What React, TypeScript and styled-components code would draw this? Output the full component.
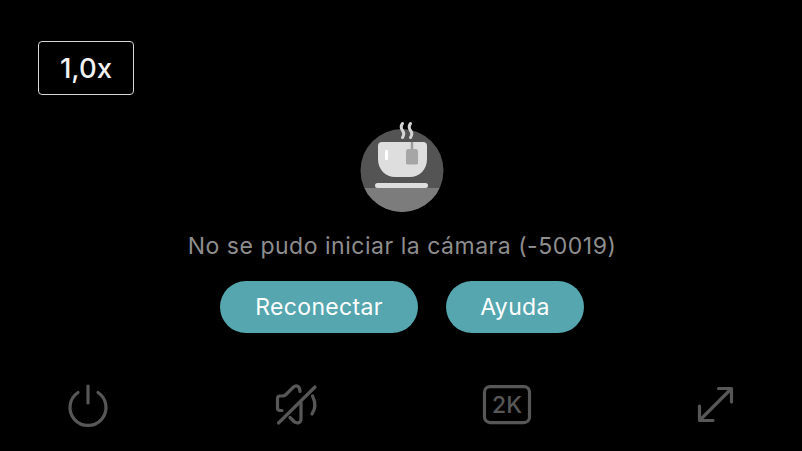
import styled, { createGlobalStyle } from 'styled-components'

const GlobalStyle = createGlobalStyle`
    html, body {
        margin: 0;
        padding: 0;
        background: #000;
    }
`

const Screen = styled.div`
    width: 802px;
    height: 451px;
    box-sizing: border-box;
    padding-top: 41px;
    background: #000;
    display: flex;
    flex-direction: column;
    font-family: Inter, 'Liberation Sans', sans-serif;
    overflow: hidden;
`

const TopBar = styled.div`
    display: flex;
    padding-left: 38px;
`

const SpeedBadge = styled.div`
    width: 96px;
    height: 54px;
    box-sizing: border-box;
    border: 1px solid #d8d8d8;
    border-radius: 4px;
    display: flex;
    align-items: center;
    justify-content: center;
    color: #f2f2f2;
    font-size: 27.5px;
    font-weight: 500;
`

const Message = styled.div`
    display: flex;
    flex-direction: column;
    align-items: center;
    padding: 26px 0 0 2px;
`

const ErrorText = styled.div`
    margin-top: 20px;
    height: 27px;
    line-height: 27px;
    color: #8e8e8e;
    font-size: 23px;
    letter-spacing: 0.52px;
`

const Actions = styled.div`
    display: flex;
    gap: 28px;
    margin-top: 21px;
`

const ActionButton = styled.button<{ $width: number }>`
    width: ${(p) => p.$width}px;
    height: 52px;
    border: none;
    border-radius: 26px;
    background: #55a6ae;
    color: #fff;
    font-family: inherit;
    font-size: 23px;
    letter-spacing: 0.35px;
    padding: 0;
`

const Toolbar = styled.div`
    display: flex;
    gap: 165.33px;
    margin-top: 49px;
    padding-left: 66px;
`

const ToolIcon = styled.svg`
    width: 44px;
    height: 44px;
    overflow: visible;
    flex-shrink: 0;
    fill: none;
    stroke: #575757;
    stroke-width: 3.2;
    stroke-linecap: round;
    stroke-linejoin: round;
`

const QualityText = styled.text`
    fill: #575757;
    stroke: none;
    font-family: Inter, 'Liberation Sans', sans-serif;
    font-size: 23px;
    font-weight: 500;
    text-anchor: middle;
`

const CupIllustration = () => (
    <svg width="84" height="92" viewBox="0 0 84 92">
        <defs>
            <clipPath id="disc">
                <circle cx="42" cy="49.500" r="41.500" />
            </clipPath>
        </defs>
        <circle cx="42" cy="49.500" r="41.500" fill="#545454" />
        <rect x="0" y="67" width="84" height="30" fill="#7c7c7c" clipPath="url(#disc)" />
        <path
            d="M42.500 2.500c-1.800 2.500-1.800 4.500 0 7s1.800 4.500 0 7M50.500 2.500c-1.800 2.500-1.800 4.500 0 7s1.800 4.500 0 7"
            fill="none"
            stroke="#d4d4d4"
            strokeWidth="3"
            strokeLinecap="round"
        />
        <path
            d="M18 25a4 4 0 0 1 4-4h41a4 4 0 0 1 4 4v13c0 11-8 18-17 18H35c-9 0-17-7-17-18z"
            fill="#dedede"
        />
        <rect x="25" y="29" width="3" height="10" rx="1" fill="#fff" />
        <path d="M52 21v8" stroke="#9b9b9b" strokeWidth="2.500" />
        <path d="M47.500 28h9l1.500 1.500v12.500a1.500 1.500 0 0 1-1.500 1.500h-9a1.500 1.500 0 0 1-1.500-1.500V29.500z" fill="#a6a6a6" />
        <rect x="15" y="62" width="53" height="5" rx="2.500" fill="#dedede" />
    </svg>
)

export default function App() {
    return (
        <Screen>
            <GlobalStyle />
            <TopBar>
                <SpeedBadge>1,0x</SpeedBadge>
            </TopBar>
            <Message>
                <CupIllustration />
                <ErrorText>No se pudo iniciar la cámara (-50019)</ErrorText>
                <Actions>
                    <ActionButton $width={198}>Reconectar</ActionButton>
                    <ActionButton $width={138}>Ayuda</ActionButton>
                </Actions>
            </Message>
            <Toolbar>
                <ToolIcon viewBox="0 0 44 44">
                    <path d="M22 4v17" />
                    <path d="M12 10.500a18 18 0 1 0 20 0" />
                </ToolIcon>
                <ToolIcon viewBox="0 0 44 44">
                    <path d="M25 9.500c0-5-3.500-7-6.500-4.500L11 12.500c-1 1-2 1.500-3.500 1.500H5a2.500 2.500 0 0 0-2.500 2.500v9c0 2 1 3 2.500 3h2" />
                    <path d="M26 21v16c0 4-4 5-7 2.500l-4-4" />
                    <path d="M37.500 14c3 6 3 13-.500 18" />
                    <path d="M3.500 41L40 5" />
                </ToolIcon>
                <ToolIcon viewBox="0 0 44 44">
                    <rect x="-.5" y="4.600" width="45" height="36" rx="5.500" />
                    <QualityText x="22" y="30.800">2K</QualityText>
                </ToolIcon>
                <ToolIcon viewBox="0 0 44 44">
                    <path d="M24.500 6.500h13V20" />
                    <path d="M37 7L6 38" />
                    <path d="M5.500 24v14.500H19" />
                </ToolIcon>
            </Toolbar>
        </Screen>
    )
}
